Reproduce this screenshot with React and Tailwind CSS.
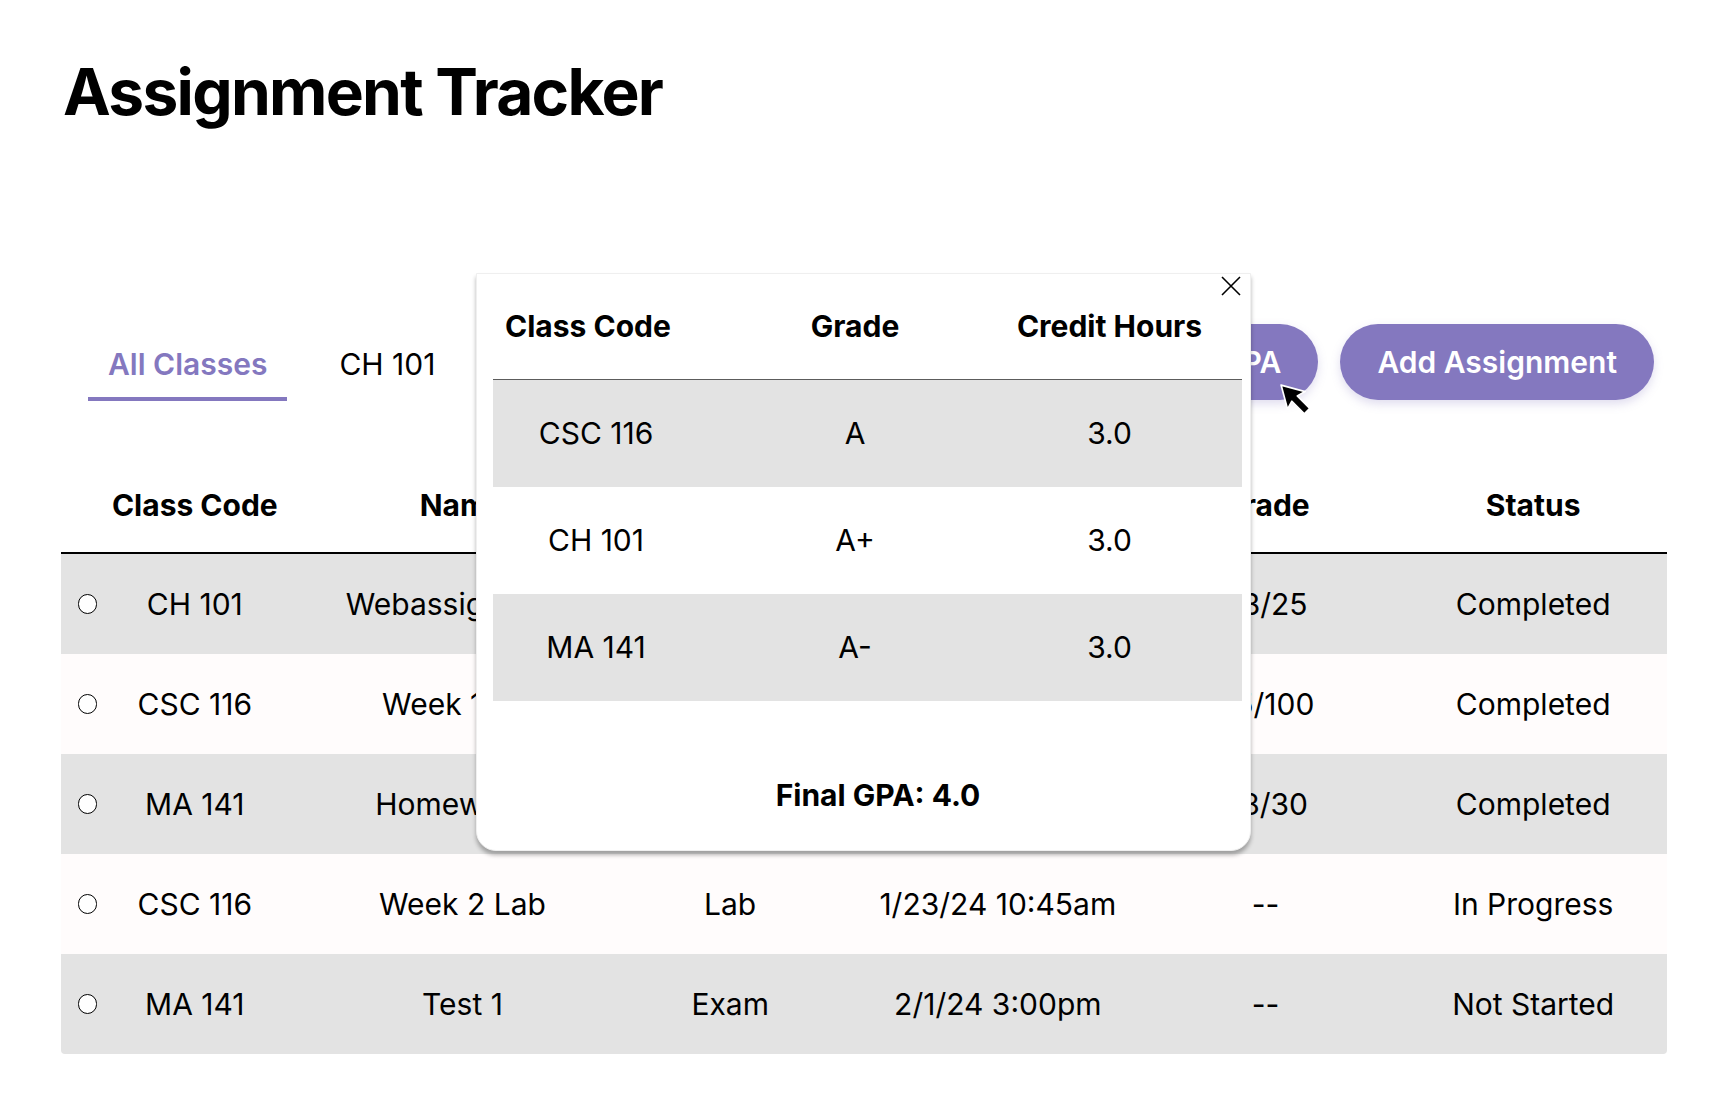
import React from "react";

const rows = [
  { code: "CH 101", name: "Webassign Ch. 1", type: "Homework", due: "1/19/24 11:59pm", grade: "23/25", status: "Completed" },
  { code: "CSC 116", name: "Week 1 Lab", type: "Lab", due: "1/16/24 10:45am", grade: "95/100", status: "Completed" },
  { code: "MA 141", name: "Homework 1", type: "Homework", due: "1/22/24 11:59pm", grade: "28/30", status: "Completed" },
  { code: "CSC 116", name: "Week 2 Lab", type: "Lab", due: "1/23/24 10:45am", grade: "--", status: "In Progress" },
  { code: "MA 141", name: "Test 1", type: "Exam", due: "2/1/24 3:00pm", grade: "--", status: "Not Started" },
];

const gpaRows = [
  { code: "CSC 116", grade: "A", hours: "3.0" },
  { code: "CH 101", grade: "A+", hours: "3.0" },
  { code: "MA 141", grade: "A-", hours: "3.0" },
];

const headers = ["Class Code", "Name", "Type", "Due Date", "Grade", "Status"];

const GpaModal = () => {
  return (
    <div className="absolute left-[476px] top-[273px] w-[775px] h-[578px] bg-white rounded-b-[20px] border border-[#efefef] shadow-[0_4px_4px_rgba(0,0,0,0.3)] flex flex-col pl-[16px] pr-[8px]">
      <button className="absolute top-0 right-[7px] w-[24px] h-[24px] flex items-center justify-center">
        <svg width="22" height="22" viewBox="0 0 22 22" fill="none" stroke="black" strokeWidth="1.6">
          <path d="M2 2 L20 20 M20 2 L2 20" />
        </svg>
      </button>

      <div className="grid grid-cols-[206px_312px_1fr] h-[106px] items-center border-b border-[#5c5c5c] font-bold text-[30px]">
        <div className="pl-[12px]">Class Code</div>
        <div className="text-center">Grade</div>
        <div className="text-center pr-[34px]">Credit Hours</div>
      </div>

      {gpaRows.map((r, i) => (
        <div
          key={i}
          className={`grid grid-cols-[206px_312px_1fr] h-[107px] items-center text-[30px] ${i % 2 === 0 ? "bg-[#e3e3e3]" : "bg-white"}`}
        >
          <div className="text-center">{r.code}</div>
          <div className="text-center">{r.grade}</div>
          <div className="text-center pr-[34px]">{r.hours}</div>
        </div>
      ))}

      <p className="mt-[78px] text-center font-bold text-[30px] leading-[32px] pl-[21px]">Final GPA: 4.0</p>
    </div>
  );
};

const Cursor = () => (
  <svg className="absolute left-[1278px] top-[382px]" width="37" height="37" viewBox="0 0 24 24">
    <path
      d="M2 2 L17.6 6.2 L12.5 9 L20.6 17.1 L17.1 20.6 L9 12.5 L6.2 17.6 Z"
      fill="black"
      stroke="white"
      strokeWidth="1.1"
      strokeLinejoin="round"
    />
  </svg>
);

export default function App() {
  return (
    <div className="relative min-h-screen bg-white text-black font-['Inter',sans-serif]">
      <div className="px-[61px] pt-[56px]">
        <h1 className="pl-[2px] text-[64px] leading-[72px] font-bold tracking-[-0.027em]">Assignment Tracker</h1>

        <div className="mt-[196px] flex items-end justify-between">
          <div className="flex items-end gap-[32px] pl-[27px]">
            <button className="px-[20px] pb-[15px] border-b-4 border-[#8478bf] text-[#8478bf] font-semibold text-[30px] leading-[36px]">
              All Classes
            </button>
            <button className="px-[20px] pb-[15px] border-b-4 border-transparent text-[30px] leading-[36px]">CH 101</button>
            <button className="px-[20px] pb-[15px] border-b-4 border-transparent text-[30px] leading-[36px]">CSC 116</button>
            <button className="px-[20px] pb-[15px] border-b-4 border-transparent text-[30px] leading-[36px]">MA 141</button>
          </div>
          <div className="flex items-center gap-[22px] pr-[13px] mb-[1px]">
            <button className="h-[76px] px-[37px] rounded-full bg-[#8478bf] text-white font-semibold text-[30px] shadow-[0_4px_10px_rgba(132,120,191,0.25)]">
              Calculate GPA
            </button>
            <button className="h-[76px] px-[37px] rounded-full bg-[#8478bf] text-white font-semibold text-[30px] shadow-[0_4px_10px_rgba(132,120,191,0.25)]">
              Add Assignment
            </button>
          </div>
        </div>

        <div className="mt-[57px]">
          <div className="grid grid-cols-6 h-[96px] items-center border-b-2 border-black font-bold text-[30px]">
            {headers.map((h) => (
              <div key={h} className="text-center">{h}</div>
            ))}
          </div>
          {rows.map((r, i) => (
            <div
              key={i}
              className={`grid grid-cols-6 h-[100px] items-center text-[30px] ${i % 2 === 0 ? "bg-[#e3e3e3]" : "bg-[#fffcfc]"} ${i === rows.length - 1 ? "rounded-b-[4px]" : ""}`}
            >
              <div className="flex items-center px-[17px]">
                <span className="w-[19px] h-[20px] rounded-full border border-black bg-white" />
                <span className="flex-1 text-center">{r.code}</span>
                <span className="w-[19px]" />
              </div>
              <div className="text-center">{r.name}</div>
              <div className="text-center">{r.type}</div>
              <div className="text-center">{r.due}</div>
              <div className="text-center">{r.grade}</div>
              <div className="text-center">{r.status}</div>
            </div>
          ))}
        </div>
      </div>

      <GpaModal />
      <Cursor />
    </div>
  );
}
